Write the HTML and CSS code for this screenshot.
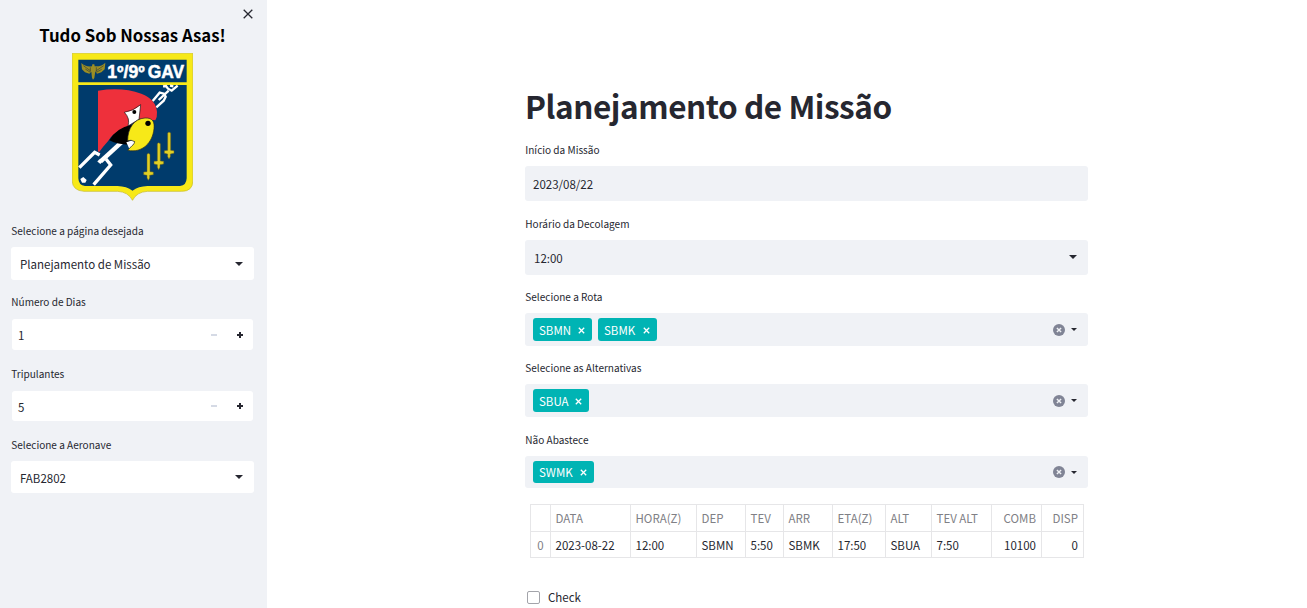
FILE: index.html
```html
<!DOCTYPE html>
<html lang="pt-BR">
<head>
<meta charset="utf-8">
<title>Planejamento de Missão</title>
<link rel="stylesheet" href="styles.css">
</head>
<body>
<div class="app">
  <aside class="sidebar">
    <button class="close" aria-label="Fechar"><svg width="10" height="10" viewBox="0 0 10 10"><path d="M.7.7l8.6 8.6M9.3.7L.7 9.3"/></svg></button>
    <h2 class="motto">Tudo Sob Nossas Asas!</h2>
    <svg class="crest" viewBox="36 24 363 444">
      <path d="M36.500 24.500H398.500V408Q398 439 365 439H262Q230 441 217.500 466Q205 441 173 439H72Q38 437 36.500 408Z" fill="#f7e918" stroke="#c5b923" stroke-width="2"/>
      <path d="M55 44H380V112H55Z" fill="#003b6c"/>
      <path d="M55 120H380V400Q379 422 360 423H262Q235 424 217.500 437Q200 424 173 423H75Q56 422 55 400Z" fill="#003b6c"/>
      <g fill="none" stroke="#fff">
        <path d="M58 368L104 322L119 330M138 342L152 360L101 419" stroke-width="10"/>
        <path d="M122 349L200 278" stroke-width="13"/>
        <path d="M115 346L124 354" stroke-width="9"/>
        <path d="M278 168L299 143L312 146L317 155L311 167L289 187" stroke-width="7"/>
        <path d="M296 165L326 137" stroke-width="7"/>
        <path d="M309 124L318 123L324 131L335 137L353 122M330 122L340 124" stroke-width="7"/>
      </g>
      <path d="M61 402L70 396L80 405L76 413L66 413Z" fill="#fff"/>
      <path d="M114 137Q186 125 244 146Q288 163 291 201Q292 216 286 226L238 221L210 240Q158 263 145 287Q127 307 117 322L114 318Z" fill="#ee303b"/>
      <path d="M193 202Q220 198 242 179L237 223L204 243Q211 220 193 202Z" fill="#fff" stroke="#111" stroke-width="2"/>
      <path d="M148 286Q167 249 216 239L205 299Q174 299 148 286Z" fill="#000"/>
      <path d="M199 292L218 286L226 293L208 311Z" fill="#fff"/>
      <path d="M203 287C203 250 222 221 255 219C279 218 284 231 282 251C278 293 247 325 203 316L216 302Q224 297 224 290Q213 283 203 287Z" fill="#f7e918" stroke="#222" stroke-width="2"/>
      <circle cx="223" cy="201" r="6"/><circle cx="264" cy="235" r="8"/>
      <g fill="#dfcf25" stroke="#665f20" stroke-width="1.500">
        <path id="sword" d="M261 328L265 325L270 328V380L280 381V389L269 391V399L265 406L261 399V391L251 389V381L261 380Z"/>
        <use href="#sword" x="31" y="-32"/><use href="#sword" x="62" y="-64"/>
      </g>
      <path d="M64 54Q75 66 96 64L97 58H103L104 64Q126 65 136 53L134 73L124 82L111 86L106 79L103 99L99 104L96 98L94 80L88 86L75 82L66 73Z" fill="#9b8e25"/>
      <path d="M70 62L91 77M76 72L91 82M131 62L109 77M125 73L109 82M91 67V80M109 67V80" stroke="#343f39" stroke-width="2"/>
      <text class="crest-text" x="142" y="100" textLength="112" lengthAdjust="spacingAndGlyphs">1º/9º</text>
      <text class="crest-text" x="263" y="100" textLength="109" lengthAdjust="spacingAndGlyphs">GAV</text>
    </svg>
    <section class="fields">
      <div class="field h71"><label>Selecione a página desejada</label><div class="box select h33"><span>Planejamento de Missão</span><i class="caret"></i></div></div>
      <div class="field h72 number"><label>Número de Dias</label><div class="box h31"><span>1</span><i class="minus"></i><i class="plus"></i></div></div>
      <div class="field h71 number"><label>Tripulantes</label><div class="box h30"><span>5</span><i class="minus"></i><i class="plus"></i></div></div>
      <div class="field"><label>Selecione a Aeronave</label><div class="box select h32"><span>FAB2802</span><i class="caret"></i></div></div>
    </section>
  </aside>
  <main class="main">
    <h1>Planejamento de Missão</h1>
    <div class="field h74"><label>Início da Missão</label><div class="box date h35"><span>2023/08/22</span></div></div>
    <div class="field h73"><label>Horário da Decolagem</label><div class="box select time h35"><span>12:00</span><i class="caret"></i></div></div>
    <div class="field h71"><label>Selecione a Rota</label><div class="box multi h33">
      <span class="tag w59">SBMN<svg viewBox="0 0 7 7"><path d="M.8.8l5.400 5.400M6.200.8L.8 6.200"/></svg></span>
      <span class="tag w59">SBMK<svg viewBox="0 0 7 7"><path d="M.8.8l5.400 5.400M6.200.8L.8 6.200"/></svg></span>
      <svg class="clear" viewBox="0 0 12 12"><circle cx="6" cy="6" r="6"/><path d="M3.900 3.900l4.200 4.200M8.100 3.900L3.900 8.100"/></svg><i class="caret small"></i></div></div>
    <div class="field h72"><label>Selecione as Alternativas</label><div class="box multi h33">
      <span class="tag w56">SBUA<svg viewBox="0 0 7 7"><path d="M.8.8l5.400 5.400M6.200.8L.8 6.200"/></svg></span>
      <svg class="clear" viewBox="0 0 12 12"><circle cx="6" cy="6" r="6"/><path d="M3.900 3.900l4.200 4.200M8.100 3.900L3.900 8.100"/></svg><i class="caret small"></i></div></div>
    <div class="field h72"><label>Não Abastece</label><div class="box multi last h32">
      <span class="tag w61">SWMK<svg viewBox="0 0 7 7"><path d="M.8.8l5.400 5.400M6.200.8L.8 6.200"/></svg></span>
      <svg class="clear" viewBox="0 0 12 12"><circle cx="6" cy="6" r="6"/><path d="M3.900 3.900l4.200 4.200M8.100 3.900L3.900 8.100"/></svg><i class="caret small"></i></div></div>
    <table>
      <colgroup><col class="c20"><col class="c80"><col class="c66"><col class="c49"><col class="c38"><col class="c49"><col class="c53"><col class="c46"><col class="c60"><col class="c50"><col class="c42"></colgroup>
      <tr><th></th><th>DATA</th><th>HORA(Z)</th><th>DEP</th><th>TEV</th><th>ARR</th><th>ETA(Z)</th><th>ALT</th><th>TEV ALT</th><th class="num">COMB</th><th class="num">DISP</th></tr>
      <tr><th class="index">0</th><td>2023-08-22</td><td>12:00</td><td>SBMN</td><td>5:50</td><td>SBMK</td><td>17:50</td><td>SBUA</td><td>7:50</td><td class="num">10100</td><td class="num">0</td></tr>
    </table>
    <div class="check"><span class="tick"></span><span>Check</span></div>
  </main>
</div>
</body>
</html>
```

FILE: styles.css
```css
* { box-sizing: border-box; }
body {
  margin: 0;
  height: 608px;
  overflow: hidden;
  background: #fff;
  color: #262730;
  font: 11.5px/18px "Noto Sans CJK SC", "Noto Sans", sans-serif;
}
.app { display: flex; height: 608px; }
.sidebar {
  width: 267px;
  flex: none;
  display: flex;
  flex-direction: column;
  background: #f0f2f6;
  padding: 9px 13px 0 11px;
}
.close {
  display: flex;
  align-self: flex-end;
  margin-right: 1px;
  padding: 0;
  border: 0;
  background: none;
}
.close svg { fill: none; stroke: #262730; stroke-width: 1.3; }
.motto {
  margin: 4px 0 0;
  height: 30px;
  line-height: 24px;
  font-size: 16.8px;
  font-weight: 700;
  text-align: center;
  color: #000;
  white-space: nowrap;
}
.crest { width: 121px; height: 148px; align-self: center; }
.crest-text { font: 700 54px "Liberation Sans", Arial, sans-serif; fill: #fff; stroke: #fff; stroke-width: 1.5; }
.fields { margin-top: 22px; }
.field label {
  display: block;
  height: 24px;
  font-size: 10.05px;
  line-height: 16px;
  padding-left: .3px;
}
.field.number label { height: 25px; }
.box {
  display: flex;
  align-items: center;
  background: #f0f2f6;
  border-radius: 3px;
  padding: 0 9px;
}
.fields .box { background: #fff; }
.box span:first-child { flex: 1; padding-top: 1px; }
.box.time span:first-child { padding-top: 0; }
.time .caret { margin-top: -1px; }
.number .box { margin: 0 1px; padding: 0 10px 0 6px; }
.date.box { padding-left: 8px; }
.h30 { height: 30px; } .h31 { height: 31px; } .h32 { height: 32px; }
.h33 { height: 33px; } .h35 { height: 35px; }
.h71 { height: 71px; } .h72 { height: 72px; } .h73 { height: 73px; } .h74 { height: 74px; }
.caret {
  margin-right: 2px;
  border: 4px solid transparent;
  border-top-color: #262730;
  border-bottom: 0;
}
.caret.small { border-width: 3.5px 3px 0; }
.minus { width: 6px; height: 2px; background: #d5dae5; margin-right: 20px; }
.plus {
  width: 6px;
  height: 6px;
  background: linear-gradient(#262730, #262730) center / 6px 2px no-repeat,
    linear-gradient(#262730, #262730) center / 2px 6px no-repeat;
}
.main { width: 563px; margin-left: 258px; padding-top: 83px; }
h1 {
  margin: 0;
  height: 59px;
  line-height: 44px;
  font-size: 31.5px;
  font-weight: 700;
  letter-spacing: -.44px;
  white-space: nowrap;
}
.box.multi { padding: 0 10px 0 8px; gap: 6px; }
.box .tag, .box .tag:first-child {
  display: flex;
  flex: none;
  align-items: center;
  justify-content: space-between;
  height: 23px;
  padding: 1px 7px 0 6px;
  border-radius: 3px;
  background: #00b4b4;
  color: #fff;
}
.box.last .tag:first-child { height: 22px; padding-top: 0; }
.tag svg { width: 7px; height: 7px; fill: none; stroke: #fff; stroke-width: 1.3; }
.w56 { width: 56px; } .w59 { width: 59px; } .w61 { width: 61px; }
.clear { width: 12px; height: 12px; margin-left: auto; fill: #808495; }
.clear path { fill: none; stroke: #f0f2f6; stroke-width: 1.4; }
.multi .caret.small { margin: 0 1px 0 0; }
table {
  width: 554px;
  margin-left: 5px;
  border-collapse: collapse;
  table-layout: fixed;
}
th, td {
  height: 26px;
  padding: 0 5px 0 4.500px;
  border: 1px solid #e6e6e8;
  text-align: left;
  font-weight: 400;
  line-height: 18px;
  white-space: nowrap;
}
th { color: #808085; }
tr:first-child th { height: 27px; }
.num { text-align: right; }
.index { padding: 0; text-align: center; }
.c20 { width: 20px; } .c80 { width: 80px; } .c66 { width: 66px; } .c49 { width: 49px; }
.c38 { width: 38px; } .c53 { width: 53px; } .c46 { width: 46px; } .c60 { width: 60px; }
.c50 { width: 50px; } .c42 { width: 42px; }
.check { display: flex; align-items: center; gap: 8px; margin: 30px 0 0 2px; }
.tick { width: 13px; height: 13px; border: 1px solid #a3a4aa; border-radius: 2px; }
```
